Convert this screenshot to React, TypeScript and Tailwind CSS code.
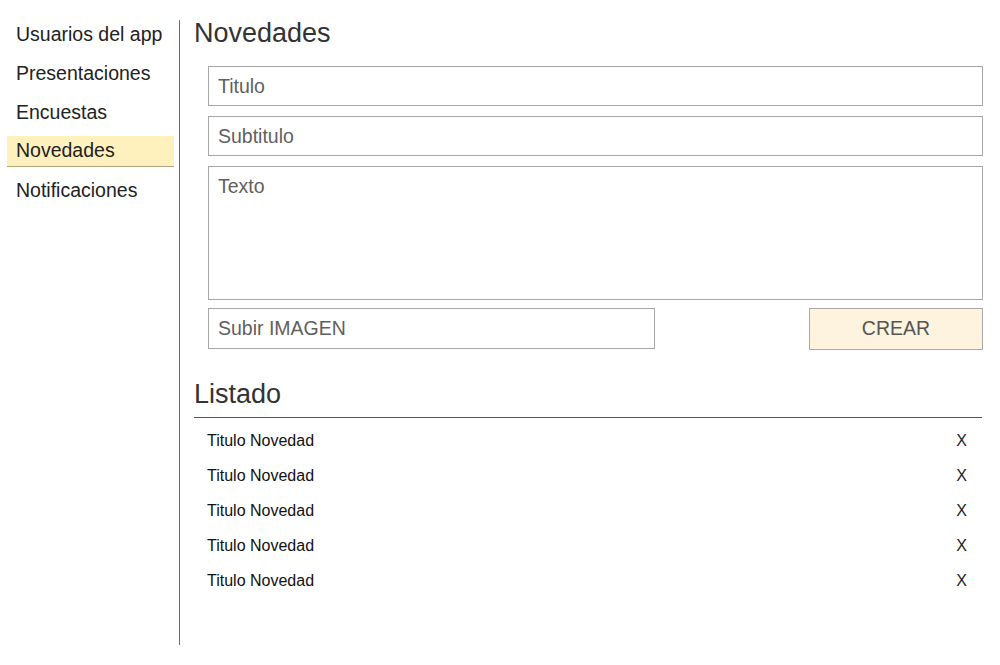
import React from 'react';

const menu = ['Usuarios del app', 'Presentaciones', 'Encuestas', 'Novedades', 'Notificaciones'];
const items = ['Titulo Novedad', 'Titulo Novedad', 'Titulo Novedad', 'Titulo Novedad', 'Titulo Novedad'];

const fieldClass =
  'block w-full border border-[#a6a6a6] bg-white px-[9px] text-[19.5px] text-[#444] outline-none placeholder:text-[#5f5f5f]';

const App: React.FC = () => {
  return (
    <div className="flex w-[1000px] h-[665px] bg-white font-['Liberation_Sans',Arial,sans-serif]">
      <aside className="mt-[20px] h-[625px] w-[180px] shrink-0 border-r border-[#6b6b6b]">
        <div className="mt-[-1px]">
          {menu.map((label) => (
            <div
              key={label}
              className={
                label === 'Novedades'
                  ? 'mb-[8px] ml-[7px] mr-[5px] flex h-[31px] items-center border-b border-[#b3a67d] bg-[#fff1be] px-[9px] text-[19.5px] text-[#222]'
                  : 'mb-[8px] ml-[7px] mr-[5px] flex h-[31px] items-center px-[9px] text-[19.5px] text-[#222]'
              }
            >
              {label}
            </div>
          ))}
        </div>
      </aside>

      <main className="flex-1 pl-[14px] pr-[17px] pt-[17px]">
        <h1 className="h-[32px] text-[27px] leading-[32px] text-[#333]">Novedades</h1>

        <div className="ml-[14px] mt-[17px] flex flex-col gap-[10px]">
          <input className={`${fieldClass} h-[40px]`} placeholder="Titulo" />
          <input className={`${fieldClass} h-[40px]`} placeholder="Subtitulo" />
          <textarea className={`${fieldClass} h-[134px] resize-none pt-[8px] leading-[22px]`} placeholder="Texto" />
          <div className="mt-[-2px] flex items-start justify-between">
            <input className={`${fieldClass} h-[41px] !w-[447px]`} placeholder="Subir IMAGEN" />
            <button
              type="button"
              className="h-[42px] w-[174px] border border-[#a8a8a8] bg-[#fdf3de] text-[19.5px] text-[#555]"
            >
              CREAR
            </button>
          </div>
        </div>

        <h2 className="mt-[28px] w-[788px] border-b border-[#555] pb-[7px] text-[27px] leading-[32px] text-[#333]">
          Listado
        </h2>

        <ul className="mt-[5px] w-[788px]">
          {items.map((t, i) => (
            <li key={i} className="flex h-[35px] items-center justify-between pl-[13px] pr-[15px] text-[16px] text-[#111]">
              <span>{t}</span>
              <button type="button" className="text-[16px] text-[#222]">
                X
              </button>
            </li>
          ))}
        </ul>
      </main>
    </div>
  );
};

export default App;
